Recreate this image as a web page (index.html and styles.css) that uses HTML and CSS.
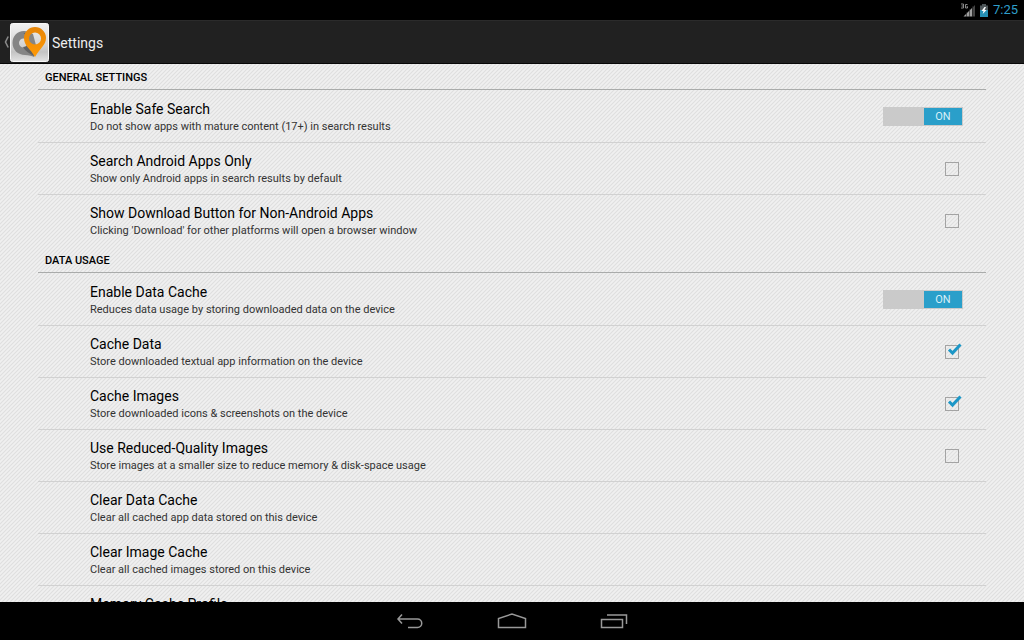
FILE: index.html
```html
<!DOCTYPE html>
<html lang="en">
<head>
<meta charset="utf-8">
<title>Settings</title>
<link rel="stylesheet" href="styles.css">
</head>
<body>
<div class="status-bar">
  <svg class="signal" width="16" height="14" viewBox="0 0 16 14" role="img" aria-label="3G signal">
    <path d="M1 1h2.500v4H1M1.500 3h2M7.500 1.500H5.500v3.500h2V3.500H6.700" fill="none" stroke="#8a8a8a"/>
    <path d="M3.500 13.500 12 5v8.500z" fill="#a0a0a0"/>
    <path d="M12 5l3-3v11.500h-3z" fill="#444"/>
    <path d="M6.500 9v5M9.500 6v8M12.500 3v11" stroke="#222" stroke-width=".6"/>
  </svg>
  <svg class="battery" width="8" height="13" viewBox="0 0 8 13" role="img" aria-label="Battery charging">
    <path d="M2 0h4v1.500h2V13H0V1.500h2z" fill="#4d5558"/>
    <path d="M0 6h8v7H0z" fill="#2590b5"/>
    <path d="M4.500 3 1.500 7h2L2.700 10 6.500 6H4.500L6 3z" fill="#fff"/>
  </svg>
  <span class="clock">7:25</span>
</div>
<header class="action-bar">
  <button class="up" type="button" aria-label="Navigate up">
    <svg class="chevron" width="5" height="12" viewBox="0 0 5 12"><path d="M4.200.500 1.500 6l2.700 5.500" fill="none" stroke="#8a8a8a" stroke-width="1.600"/></svg>
    <svg class="logo" width="39" height="39" viewBox="0 0 39 39">
      <defs>
        <linearGradient id="tile" x1="0" y1="0" x2="0" y2="1"><stop offset="0" stop-color="#f2f2f2"/><stop offset=".55" stop-color="#d5d5d5"/><stop offset=".75" stop-color="#c4c4c4"/><stop offset="1" stop-color="#e2e2e2"/></linearGradient>
        <linearGradient id="pin" x1="0" y1="0" x2="0" y2="1"><stop offset="0" stop-color="#e5860a"/><stop offset=".35" stop-color="#f08c05"/><stop offset="1" stop-color="#ff9a06"/></linearGradient>
      </defs>
      <rect x=".5" y=".5" width="38" height="38" rx="2" fill="url(#tile)" stroke="#f8f8f8"/>
      <path fill="#858585" fill-rule="evenodd" d="M14 8C7 8 2.500 13 2.500 20S8 32 15 32c4 0 7 1 9 2l3-8-4-15c-3-2-6-3-9-3zm-.5 7.500a4.500 4.500 0 1 1 0 9 4.500 4.500 0 0 1 0-9z"/>
      <path fill="#626262" d="M13.500 10c4 3 5 6 4.500 10-1 3-3 4-5 4 2 4 6 6 11 9l1-3-8-11-2-9z"/>
      <path fill="url(#pin)" fill-rule="evenodd" d="M25 4a11 11 0 0 0-11 11c0 8 6 10 11 19 5-9 11-12 11-19A11 11 0 0 0 25 4zm0 5.500a6 6 0 1 1 0 12 6 6 0 0 1 0-12z"/>
    </svg>
  </button>
  <h1 class="title">Settings</h1>
</header>
<main class="settings">
  <section>
    <h2 class="category">GENERAL SETTINGS</h2>
    <ul class="list">
      <li><label class="row"><span class="text"><span class="name">Enable Safe Search</span><span class="note">Do not show apps with mature content (17+) in search results</span></span><span class="switch"><input type="checkbox" role="switch" checked><span class="thumb">ON</span></span></label></li>
      <li><label class="row"><span class="text"><span class="name">Search Android Apps Only</span><span class="note">Show only Android apps in search results by default</span></span><span class="check"><input type="checkbox"></span></label></li>
      <li><label class="row"><span class="text"><span class="name">Show Download Button for Non-Android Apps</span><span class="note">Clicking 'Download' for other platforms will open a browser window</span></span><span class="check"><input type="checkbox"></span></label></li>
    </ul>
  </section>
  <section>
    <h2 class="category">DATA USAGE</h2>
    <ul class="list">
      <li><label class="row"><span class="text"><span class="name">Enable Data Cache</span><span class="note">Reduces data usage by storing downloaded data on the device</span></span><span class="switch"><input type="checkbox" role="switch" checked><span class="thumb">ON</span></span></label></li>
      <li><label class="row"><span class="text"><span class="name">Cache Data</span><span class="note">Store downloaded textual app information on the device</span></span><span class="check"><input type="checkbox" checked><svg class="tick" width="18" height="18" viewBox="0 0 18 18"><path d="M4 8.500l3.500 3.500 8-8.500"/></svg></span></label></li>
      <li><label class="row"><span class="text"><span class="name">Cache Images</span><span class="note">Store downloaded icons &amp; screenshots on the device</span></span><span class="check"><input type="checkbox" checked><svg class="tick" width="18" height="18" viewBox="0 0 18 18"><path d="M4 8.500l3.500 3.500 8-8.500"/></svg></span></label></li>
      <li><label class="row"><span class="text"><span class="name">Use Reduced-Quality Images</span><span class="note">Store images at a smaller size to reduce memory &amp; disk-space usage</span></span><span class="check"><input type="checkbox"></span></label></li>
      <li><button class="row" type="button"><span class="text"><span class="name">Clear Data Cache</span><span class="note">Clear all cached app data stored on this device</span></span></button></li>
      <li><button class="row" type="button"><span class="text"><span class="name">Clear Image Cache</span><span class="note">Clear all cached images stored on this device</span></span></button></li>
      <li><button class="row row-top" type="button"><span class="text"><span class="name">Memory Cache Profile</span></span></button></li>
    </ul>
  </section>
</main>
<nav class="nav-bar">
  <button type="button" aria-label="Back"><svg width="28" height="18" viewBox="0 0 28 18"><path d="M6 2.500 2 7l4 4.500M2 7h19.500a4 4 0 0 1 0 8.500H12"/></svg></button>
  <button type="button" aria-label="Home"><svg width="30" height="18" viewBox="0 0 30 18"><path d="M1.500 15.500v-9L15 2l13.500 4.500v9z"/></svg></button>
  <button type="button" aria-label="Recent apps"><svg width="28" height="18" viewBox="0 0 28 18"><path d="M1.500 7.500h21v8h-21zM7 3h19.500v9"/></svg></button>
</nav>
</body>
</html>
```

FILE: styles.css
```css
* {
  box-sizing: border-box;
}

body {
  margin: 0;
  height: 100vh;
  display: flex;
  flex-direction: column;
  overflow: hidden;
  background: #000;
  font-family: Roboto, "Liberation Sans", sans-serif;
  color: #000;
}

button {
  padding: 0;
  border: 0;
  background: none;
  color: inherit;
  font: inherit;
}

svg {
  display: block;
}

.status-bar {
  flex: none;
  height: 20px;
  display: flex;
  align-items: center;
  justify-content: flex-end;
  padding-right: 6px;
}

.battery {
  margin: 0 5px 0 4px;
}

.clock {
  color: #2f9fca;
  font-size: 13px;
  line-height: 20px;
}

.action-bar {
  flex: none;
  height: 44px;
  display: flex;
  align-items: center;
  gap: 3px;
  background: #212121;
  border-top: 1px solid #2b2b2b;
  border-bottom: 1px solid #080808;
}

.up {
  display: flex;
  align-items: center;
  gap: 1px;
  padding-left: 4px;
}

.title {
  margin: 0;
  padding-top: 2px;
  color: #eee;
  font-size: 14px;
  font-weight: 400;
  line-height: 20px;
}

.settings {
  flex: 1;
  min-height: 0;
  overflow: hidden;
  padding: 0 38px;
  background: #f0f0f0 url("data:image/svg+xml,%3Csvg xmlns='http://www.w3.org/2000/svg' width='4' height='4'%3E%3Cpath d='M-1 1l2-2M0 4l4-4M3 5l2-2' stroke='%23dfdfdf' stroke-width='1.200'/%3E%3C/svg%3E");
}

section + section {
  padding-top: 1px;
}

.category {
  margin: 0;
  padding: 2px 7px 0;
  height: 26px;
  border-bottom: 1px solid #a9abaa;
  font-size: 11px;
  font-weight: 500;
  line-height: 24px;
}

.list {
  margin: 0;
  padding: 1px 0 0;
  list-style: none;
}

.list li + li {
  border-top: 1px solid #d1d1d1;
}

.row {
  width: 100%;
  min-height: 51px;
  display: flex;
  align-items: center;
  justify-content: space-between;
  padding: 0 23px 0 52px;
  text-align: left;
}

.row-top {
  align-items: flex-start;
  padding-top: 7px;
}

.text {
  display: flex;
  flex-direction: column;
  gap: 1px;
  padding-top: 2px;
}

.name {
  font-size: 14px;
  line-height: 18px;
}

.note {
  color: #333;
  font-size: 11px;
  line-height: 16px;
}

.switch {
  position: relative;
  width: 80px;
  height: 19px;
  display: flex;
  justify-content: flex-end;
  padding: 1px;
  background: #cacaca;
}

.switch input {
  position: absolute;
  inset: 0;
  margin: 0;
  opacity: 0;
}

.thumb {
  width: 38px;
  background: #2a9fca;
  color: #d8eff8;
  font-size: 11px;
  line-height: 18px;
  text-align: center;
}

.check {
  position: relative;
  padding: 0 4px 0 0;
}

.check input {
  appearance: none;
  display: block;
  width: 14px;
  height: 14px;
  margin: 0;
  border: 1px solid #a3a3a3;
}

.tick {
  position: absolute;
  left: 0;
  bottom: 0;
  fill: none;
  stroke: #1c97c7;
  stroke-width: 3;
}

.nav-bar {
  flex: none;
  height: 38px;
  display: flex;
  align-items: center;
  justify-content: center;
  gap: 73px;
}

.nav-bar svg {
  fill: none;
  stroke: #999;
  stroke-width: 1.5;
}
```
